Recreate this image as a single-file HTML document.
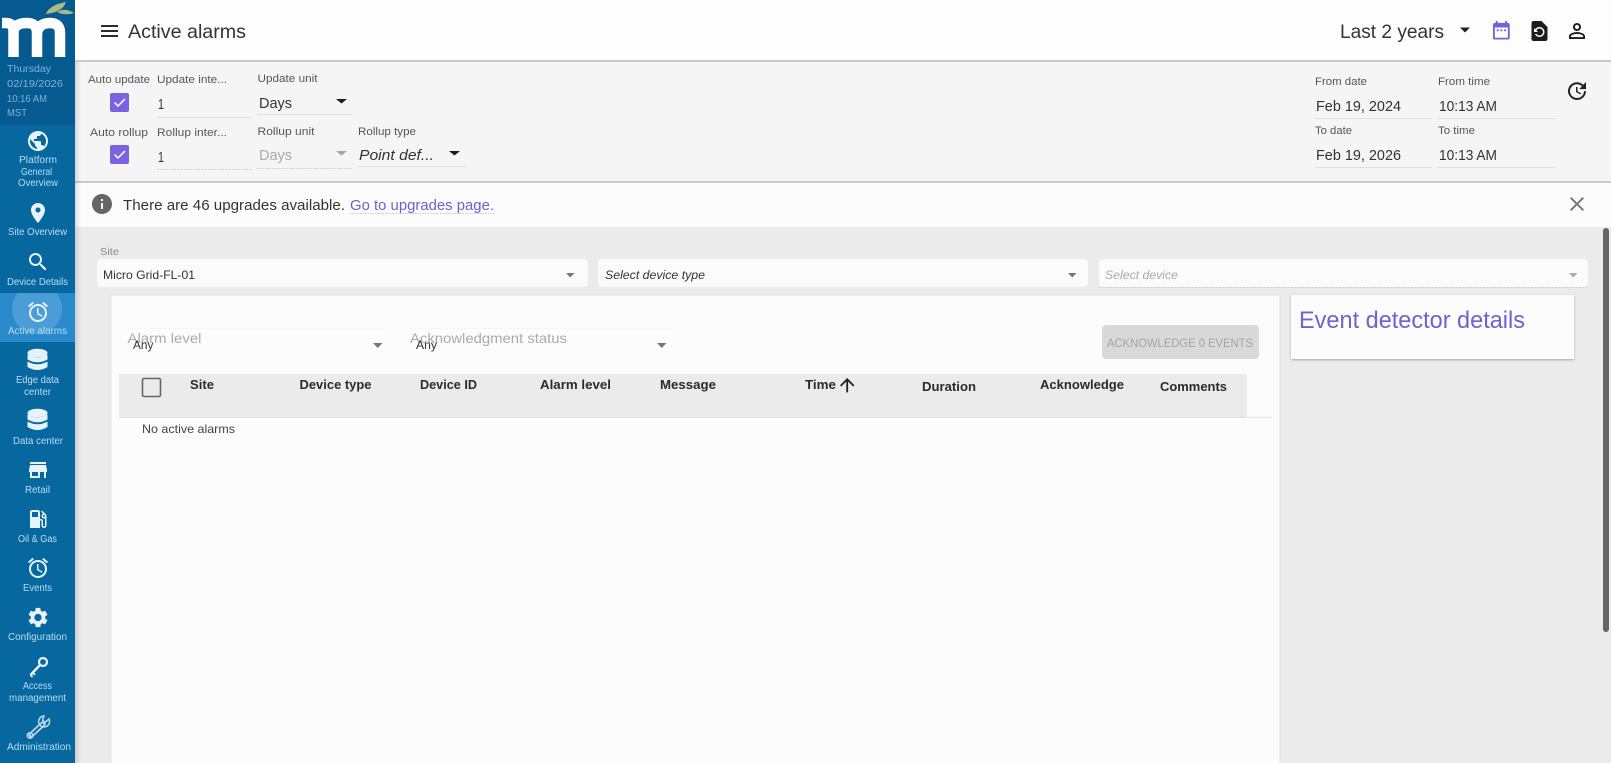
<!DOCTYPE html>
<html lang="en">
<head>
<meta charset="utf-8">
<title>Active alarms</title>
<style>
html,body{margin:0;padding:0;width:1611px;height:763px;overflow:hidden;background:#ebebeb}
svg{display:block;filter:blur(.3px)}
text{font-family:"Liberation Sans",sans-serif}
.s text{fill:#b9dcf0;font-size:10px}
.d text{fill:#7fb4d6;font-size:10.5px}
.l text{fill:#555;font-size:11px}
.v text{fill:#333;font-size:15px}
.h text{fill:#2b2b2b;font-size:12.5px;font-weight:bold}
</style>
</head>
<body>
<svg width="1611" height="763" viewBox="0 0 1611 763" xmlns="http://www.w3.org/2000/svg">
<defs>
<linearGradient id="sh" x1="0" x2="1" y1="0" y2="0"><stop offset="0" stop-color="#000" stop-opacity=".12"/><stop offset="1" stop-color="#000" stop-opacity="0"/></linearGradient>
<filter id="cs" x="-5%" y="-20%" width="110%" height="140%"><feDropShadow dx="0" dy="1" stdDeviation="1" flood-color="#000" flood-opacity=".3"/></filter>
<clipPath id="act"><rect x="0" y="293" width="75" height="49"/></clipPath>
</defs>

<rect width="1611" height="763" fill="#ebebeb"/>
<rect x="75" y="0" width="1536" height="60" fill="#fdfdfd"/>
<rect x="75" y="60" width="1536" height="2" fill="#c9c9c9"/>
<rect x="75" y="62" width="1536" height="119" fill="#f5f5f5"/>
<rect x="75" y="181" width="1536" height="2" fill="#cacaca"/>
<rect x="75" y="183" width="1536" height="44" fill="#fcfcfc"/>

<!-- Sidebar -->
<rect width="75" height="763" fill="#07689f"/>
<rect width="75" height="125" fill="#055a90"/>
<rect x="0" y="293" width="75" height="49" fill="#2a8bcc"/>
<circle cx="37" cy="309" r="25" fill="#4a9dd6" clip-path="url(#act)"/>
<rect x="75" y="62" width="6" height="701" fill="url(#sh)"/>

<!-- Logo -->
<path d="M46 14 Q49 5 66 2 Q63 12 46 14Z" fill="#a9b98a"/>
<path d="M57 12 Q65 7 74 13 Q65 16 57 12Z" fill="#a9b98a"/>
<path d="M2 23 H6 Q13.500 23 13.500 31 V57 M13.500 31 Q15 23 27 23 Q37 23 37 33 V57 M37 33 Q39 23 50 23 Q60 23 60 33 V57" fill="none" stroke="#fff" stroke-width="10.500"/>

<g class="d">
<text x="7" y="72" textLength="44" lengthAdjust="spacingAndGlyphs">Thursday</text>
<text x="7" y="87" textLength="56" lengthAdjust="spacingAndGlyphs">02/19/2026</text>
<text x="7" y="102" textLength="40" lengthAdjust="spacingAndGlyphs">10:16 AM</text>
<text x="7" y="116" textLength="20" lengthAdjust="spacingAndGlyphs">MST</text>
</g>

<g fill="#e6f3fb">
<g transform="translate(26,129)"><path d="M12 2C6.48 2 2 6.48 2 12s4.48 10 10 10 10-4.48 10-10S17.52 2 12 2zm-1 17.93c-3.95-.49-7-3.85-7-7.93 0-.62.08-1.21.21-1.79L9 15v1c0 1.1.9 2 2 2v1.93zm6.9-2.54c-.26-.81-1-1.39-1.9-1.39h-1v-3c0-.55-.45-1-1-1H8v-2h2c.55 0 1-.45 1-1V7h2c1.1 0 2-.9 2-2v-.41c2.93 1.19 5 4.06 5 7.41 0 2.08-.8 3.97-2.1 5.39z"/></g>
<g transform="translate(26,201)"><path d="M12 2C8.13 2 5 5.13 5 9c0 5.25 7 13 7 13s7-7.75 7-13c0-3.87-3.13-7-7-7zm0 9.5c-1.38 0-2.5-1.12-2.5-2.5s1.12-2.5 2.5-2.5 2.5 1.12 2.5 2.5-1.12 2.5-2.5 2.5z"/></g>
<g transform="translate(26,250)"><path d="M15.5 14h-.79l-.28-.27C15.41 12.59 16 11.11 16 9.5 16 5.91 13.09 3 9.5 3S3 5.91 3 9.5 5.91 16 9.5 16c1.61 0 3.09-.59 4.23-1.57l.27.28v.79l5 4.99L20.49 19l-4.99-5zm-6 0C7.01 14 5 11.99 5 9.5S7.01 5 9.5 5 14 7.01 14 9.5 11.99 14 9.5 14z"/></g>
<g transform="translate(26,300)"><path d="M22 5.72l-4.6-3.86-1.29 1.53 4.6 3.86L22 5.72zM7.88 3.39L6.6 1.86 2 5.71l1.29 1.53 4.59-3.85zM12.5 8H11v6l4.75 2.85.75-1.23-4-2.37V8zM12 4c-4.97 0-9 4.03-9 9s4.03 9 9 9 9-4.03 9-9-4.03-9-9-9zm0 16c-3.87 0-7-3.13-7-7s3.13-7 7-7 7 3.13 7 7-3.13 7-7 7z"/></g>
<g transform="translate(26,458)"><path d="M20 4H4v2h16V4zm1 10v-2l-1-5H4l-1 5v2h1v6h10v-6h4v6h2v-6h1zm-9 4H6v-4h6v4z"/></g>
<g transform="translate(26,507)"><path d="M19.77 7.23l.01-.01-3.72-3.72L15 4.56l2.11 2.11c-.94.36-1.61 1.26-1.61 2.33 0 1.38 1.12 2.5 2.5 2.5.36 0 .69-.08 1-.21v7.21c0 .55-.45 1-1 1s-1-.45-1-1V14c0-1.1-.9-2-2-2h-1V5c0-1.1-.9-2-2-2H6c-1.1 0-2 .9-2 2v16h10v-7.5h1.5v5c0 1.38 1.12 2.5 2.5 2.5s2.5-1.12 2.5-2.5V9c0-.69-.28-1.32-.73-1.77zM12 10H6V5h6v5zm6 0c-.55 0-1-.45-1-1s.45-1 1-1 1 .45 1 1-.45 1-1 1z"/></g>
<g transform="translate(26,556)"><path d="M22 5.72l-4.6-3.86-1.29 1.53 4.6 3.86L22 5.72zM7.88 3.39L6.6 1.86 2 5.71l1.29 1.53 4.59-3.85zM12.5 8H11v6l4.75 2.85.75-1.23-4-2.37V8zM12 4c-4.97 0-9 4.03-9 9s4.03 9 9 9 9-4.03 9-9-4.03-9-9-9zm0 16c-3.87 0-7-3.13-7-7s3.13-7 7-7 7 3.13 7 7-3.13 7-7 7z"/></g>
<g transform="translate(26,605.5)"><path d="M19.14 12.94c.04-.3.06-.61.06-.94 0-.32-.02-.64-.07-.94l2.03-1.58c.18-.14.23-.41.12-.61l-1.92-3.32c-.12-.22-.37-.29-.59-.22l-2.39.96c-.5-.38-1.03-.7-1.62-.94l-.36-2.54c-.04-.24-.24-.41-.48-.41h-3.84c-.24 0-.43.17-.47.41l-.36 2.54c-.59.24-1.13.57-1.62.94l-2.39-.96c-.22-.08-.47 0-.59.22L2.74 8.87c-.12.21-.08.47.12.61l2.03 1.58c-.05.3-.09.63-.09.94s.02.64.07.94l-2.03 1.58c-.18.14-.23.41-.12.61l1.92 3.32c.12.22.37.29.59.22l2.39-.96c.5.38 1.03.7 1.62.94l.36 2.54c.05.24.24.41.48.41h3.84c.24 0 .44-.17.47-.41l.36-2.54c.59-.24 1.13-.56 1.62-.94l2.39.96c.22.08.47 0 .59-.22l1.92-3.32c.12-.22.07-.47-.12-.61l-2.01-1.58zM12 15.6c-1.98 0-3.6-1.62-3.6-3.6s1.62-3.6 3.6-3.6 3.6 1.62 3.6 3.6-1.62 3.6-3.6 3.6z"/></g>
<!-- database stacks -->
<g transform="translate(27.5,349)"><ellipse cx="10" cy="4" rx="10" ry="4.2"/><path d="M0 5.5 Q10 11 20 5.5 V10.5 Q10 16 0 10.5Z M0 12.5 Q10 18 20 12.500 V18 Q10 24 0 18Z"/></g>
<g transform="translate(27.5,409)"><ellipse cx="10" cy="4" rx="10" ry="4.2"/><path d="M0 5.5 Q10 11 20 5.5 V10.5 Q10 16 0 10.5Z M0 12.5 Q10 18 20 12.500 V18 Q10 24 0 18Z"/></g>
</g>
<!-- key -->
<g fill="none" stroke="#e6f3fb">
<circle cx="43" cy="662" r="4" stroke-width="2.2"/>
<path d="M40 665 L30.5 675" stroke-width="2.4"/>
<path d="M33 672.5 L35 675 M30.5 675 L32.5 677" stroke-width="1.8"/>
<!-- wrench -->
<path d="M43 724 L31 735" stroke="#b7d9ee" stroke-width="5.5" stroke-linecap="round"/>
<path d="M43 724 L31 735" stroke="#07689f" stroke-width="2"/>
<path d="M49 719 A5.5 5.5 0 1 1 44 716 L42.5 720 L45 722.5Z" stroke="#b7d9ee" stroke-width="1.5"/>
<circle cx="30" cy="735.5" r="2.8" stroke="#b7d9ee" stroke-width="1.5"/>
</g>

<g class="s" text-anchor="start">
<text x="19" y="163" textLength="38" lengthAdjust="spacingAndGlyphs">Platform</text>
<text x="21" y="175" textLength="31" lengthAdjust="spacingAndGlyphs">General</text>
<text x="18" y="186" textLength="40" lengthAdjust="spacingAndGlyphs">Overview</text>
<text x="8" y="235" textLength="59" lengthAdjust="spacingAndGlyphs">Site Overview</text>
<text x="7" y="285" textLength="61" lengthAdjust="spacingAndGlyphs">Device Details</text>
<text x="8" y="334" textLength="59" lengthAdjust="spacingAndGlyphs">Active alarms</text>
<text x="16" y="383" textLength="43" lengthAdjust="spacingAndGlyphs">Edge data</text>
<text x="24" y="395" textLength="27" lengthAdjust="spacingAndGlyphs">center</text>
<text x="13" y="444" textLength="50" lengthAdjust="spacingAndGlyphs">Data center</text>
<text x="25" y="493" textLength="25" lengthAdjust="spacingAndGlyphs">Retail</text>
<text x="18" y="542" textLength="39" lengthAdjust="spacingAndGlyphs">Oil &amp; Gas</text>
<text x="23" y="591" textLength="29" lengthAdjust="spacingAndGlyphs">Events</text>
<text x="8" y="640" textLength="59" lengthAdjust="spacingAndGlyphs">Configuration</text>
<text x="23" y="689" textLength="29" lengthAdjust="spacingAndGlyphs">Access</text>
<text x="9" y="701" textLength="57" lengthAdjust="spacingAndGlyphs">management</text>
<text x="7" y="750" textLength="64" lengthAdjust="spacingAndGlyphs">Administration</text>
</g>

<!-- Top bar -->
<g fill="#2b2b2b"><rect x="101" y="25" width="17" height="2"/><rect x="101" y="30" width="17" height="2"/><rect x="101" y="35" width="17" height="2"/></g>
<text x="128" y="38" font-size="19.5" fill="#333" textLength="118" lengthAdjust="spacingAndGlyphs">Active alarms</text>
<text x="1340" y="38" font-size="19" fill="#333" textLength="104" lengthAdjust="spacingAndGlyphs">Last 2 years</text>
<path d="M1460 27.500 h10 l-5 5z" fill="#222"/>
<g transform="translate(1490.2,19.1) scale(.93)" fill="#7561d8"><path d="M9 11H7v2h2v-2zm4 0h-2v2h2v-2zm4 0h-2v2h2v-2zm2-7h-1V2h-2v2H8V2H6v2H5c-1.11 0-1.99.9-1.99 2L3 20c0 1.1.89 2 2 2h14c1.1 0 2-.9 2-2V6c0-1.1-.9-2-2-2zm0 16H5V9h14v11z"/></g>
<g transform="translate(1527.5,19)" fill="#1c1c1c"><path d="M14 2H6c-1.1 0-1.99.9-1.99 2L4 20c0 1.1.89 2 1.99 2H18c1.1 0 2-.9 2-2V8l-6-6zm-2 16c-2.05 0-3.81-1.24-4.58-3h1.71c.63.9 1.68 1.5 2.87 1.5 1.93 0 3.5-1.57 3.5-3.5S13.93 9.5 12 9.5c-1.35 0-2.52.78-3.1 1.9l1.6 1.6h-4V9l1.3 1.3C8.69 8.92 10.23 8 12 8c2.76 0 5 2.24 5 5s-2.24 5-5 5z"/></g>
<g transform="translate(1565,19)" fill="#1c1c1c"><path d="M12 5.9c1.16 0 2.1.94 2.1 2.1s-.94 2.1-2.1 2.1S9.9 9.16 9.9 8s.94-2.1 2.1-2.1m0 9c2.97 0 6.1 1.46 6.1 2.1v1.1H5.9V17c0-.64 3.13-2.1 6.1-2.1M12 4C9.79 4 8 5.79 8 8s1.79 4 4 4 4-1.79 4-4-1.79-4-4-4zm0 9c-2.67 0-8 1.34-8 4v3h16v-3c0-2.66-5.33-4-8-4z"/></g>

<!-- Toolbar labels -->
<g class="l">
<text x="88" y="83" textLength="62" lengthAdjust="spacingAndGlyphs">Auto update</text>
<text x="157" y="83" textLength="70" lengthAdjust="spacingAndGlyphs">Update inte...</text>
<text x="257.5" y="82" textLength="60" lengthAdjust="spacingAndGlyphs">Update unit</text>
<text x="90" y="136" textLength="58" lengthAdjust="spacingAndGlyphs">Auto rollup</text>
<text x="157" y="136" textLength="70" lengthAdjust="spacingAndGlyphs">Rollup inter...</text>
<text x="257.5" y="135" textLength="57" lengthAdjust="spacingAndGlyphs">Rollup unit</text>
<text x="358" y="135" textLength="58" lengthAdjust="spacingAndGlyphs">Rollup type</text>
<text x="1315" y="85" textLength="52" lengthAdjust="spacingAndGlyphs">From date</text>
<text x="1438" y="85" textLength="52" lengthAdjust="spacingAndGlyphs">From time</text>
<text x="1315" y="134" textLength="37" lengthAdjust="spacingAndGlyphs">To date</text>
<text x="1438" y="134" textLength="37" lengthAdjust="spacingAndGlyphs">To time</text>
</g>
<g class="v">
<text x="158" y="109" textLength="6" lengthAdjust="spacingAndGlyphs">1</text>
<text x="259" y="108" textLength="33" lengthAdjust="spacingAndGlyphs">Days</text>
<text x="158" y="162" textLength="6" lengthAdjust="spacingAndGlyphs">1</text>
<text x="259" y="160" textLength="33" lengthAdjust="spacingAndGlyphs" style="fill:#aaa">Days</text>
<text x="359" y="160" font-style="italic" textLength="75" lengthAdjust="spacingAndGlyphs">Point def...</text>
<text x="1316" y="111" textLength="85" lengthAdjust="spacingAndGlyphs">Feb 19, 2024</text>
<text x="1439" y="111" textLength="58" lengthAdjust="spacingAndGlyphs">10:13 AM</text>
<text x="1316" y="160" textLength="85" lengthAdjust="spacingAndGlyphs">Feb 19, 2026</text>
<text x="1439" y="160" textLength="58" lengthAdjust="spacingAndGlyphs">10:13 AM</text>
</g>
<!-- checkboxes -->
<rect x="110" y="93" width="19" height="19" rx="2" fill="#7b62e0"/>
<path d="M114.5 102.5 l3.5 3.5 l7-7" fill="none" stroke="#f1eefc" stroke-width="1.6"/>
<rect x="110" y="145" width="19" height="19" rx="2" fill="#7b62e0"/>
<path d="M114.5 154.5 l3.5 3.5 l7-7" fill="none" stroke="#f1eefc" stroke-width="1.6"/>
<!-- carets and lines -->
<g fill="#1d1d1d">
<path d="M336 99 h11 l-5.5 4.5z"/>
<path d="M449 151 h11 l-5.5 4.5z"/>
</g>
<path d="M336 151 h11 l-5.5 4.5z" fill="#a5a5a5"/>
<g stroke="#e0e0e0" stroke-width="1">
<path d="M157 117.5 H252 M257 114.5 H352 M358 166.500 H467 M1315 118.500 H1432 M1437 118.500 H1556 M1315 167.500 H1432 M1437 167.500 H1556"/>
</g>
<g stroke="#c4c4c4" stroke-width="1" stroke-dasharray="1.5 1.5">
<path d="M157 169.5 H252 M257 168.5 H352"/>
</g>
<g transform="translate(1565,79)" fill="#222"><path d="M21 10.12h-6.78l2.74-2.82c-2.73-2.7-7.15-2.8-9.88-.1-2.73 2.71-2.73 7.08 0 9.79s7.15 2.71 9.88 0C18.32 15.65 19 14.08 19 12.1h2c0 1.98-.88 4.55-2.64 6.29-3.51 3.48-9.21 3.48-12.72 0-3.5-3.47-3.53-9.11-.02-12.58s9.14-3.47 12.65 0L21 3v7.12zM12.5 8v4.25l3.5 2.08-.72 1.21L11 13V8h1.5z"/></g>

<!-- Notification -->
<g transform="translate(90,192)" fill="#666"><path d="M12 2C6.48 2 2 6.48 2 12s4.48 10 10 10 10-4.48 10-10S17.52 2 12 2zm1 15h-2v-6h2v6zm0-8h-2V7h2v2z"/></g>
<text x="123" y="210" font-size="15" fill="#333" textLength="222" lengthAdjust="spacingAndGlyphs">There are 46 upgrades available.</text>
<text x="350" y="210" font-size="15" fill="#6f5fd0" textLength="144" lengthAdjust="spacingAndGlyphs">Go to upgrades page.</text>
<path d="M350 213.5 H494" stroke="#c9c2ee" stroke-width="1" stroke-dasharray="1.5 1"/>
<g transform="translate(1565,192)" fill="#777"><path d="M19 6.41L17.59 5 12 10.59 6.41 5 5 6.41 10.59 12 5 17.59 6.41 19 12 13.41 17.59 19 19 17.59 13.41 12z"/></g>

<!-- Site selects -->
<text x="100" y="255" font-size="10" fill="#888" textLength="19" lengthAdjust="spacingAndGlyphs">Site</text>
<rect x="97" y="259" width="491" height="28" rx="4" fill="#fbfbfb"/>
<rect x="598" y="259" width="490" height="28" rx="4" fill="#fbfbfb"/>
<rect x="1099" y="259" width="489" height="28" rx="4" fill="#fbfbfb"/>
<path d="M1099 287.5 H1588" stroke="#c8c8c8" stroke-dasharray="1.5 1.5"/>
<text x="103" y="279" font-size="12" fill="#333" textLength="92" lengthAdjust="spacingAndGlyphs">Micro Grid-FL-01</text>
<text x="605" y="279" font-size="12" font-style="italic" fill="#333" textLength="100" lengthAdjust="spacingAndGlyphs">Select device type</text>
<text x="1105" y="279" font-size="12" font-style="italic" fill="#aaa" textLength="73" lengthAdjust="spacingAndGlyphs">Select device</text>
<path d="M566 273 h8.5 l-4.25 4.5z" fill="#777"/>
<path d="M1068 273 h8.5 l-4.25 4.5z" fill="#777"/>
<path d="M1569 273 h8.5 l-4.25 4.5z" fill="#aaa"/>

<!-- Main card -->
<rect x="111" y="295" width="1169" height="480" fill="#fcfcfc" stroke="#e2e2e2" stroke-width="1"/>
<path d="M127 328.5 H384 M410 328.5 H672" stroke="#f6f6f6"/>
<text x="127.5" y="343" font-size="14" fill="#aaa" textLength="74" lengthAdjust="spacingAndGlyphs">Alarm level</text>
<text x="410" y="343" font-size="14" fill="#aaa" textLength="157" lengthAdjust="spacingAndGlyphs">Acknowledgment status</text>
<text x="133" y="349" font-size="11.5" fill="#333" textLength="20.5" lengthAdjust="spacingAndGlyphs">Any</text>
<text x="416" y="349" font-size="11.5" fill="#333" textLength="21" lengthAdjust="spacingAndGlyphs">Any</text>
<path d="M373 343 h9.5 l-4.75 5z" fill="#777"/>
<path d="M657 343 h9.5 l-4.75 5z" fill="#777"/>
<rect x="1102" y="325" width="157" height="34" rx="4" fill="#d9d9d9"/>
<text x="1107" y="347" font-size="12" fill="#a3a3a3" textLength="146" lengthAdjust="spacingAndGlyphs">ACKNOWLEDGE 0 EVENTS</text>

<!-- Table -->
<rect x="119" y="374" width="1128" height="43" fill="#ebebeb"/>
<path d="M119 417.5 H1272" stroke="#e2e2e2"/>
<rect x="142.5" y="378.5" width="18" height="18" rx="1.5" fill="none" stroke="#666" stroke-width="1.6"/>
<g class="h">
<text x="190" y="389" textLength="24" lengthAdjust="spacingAndGlyphs">Site</text>
<text x="299.5" y="389" textLength="72" lengthAdjust="spacingAndGlyphs">Device type</text>
<text x="420" y="389" textLength="57" lengthAdjust="spacingAndGlyphs">Device ID</text>
<text x="540" y="389" textLength="71" lengthAdjust="spacingAndGlyphs">Alarm level</text>
<text x="660" y="389" textLength="56" lengthAdjust="spacingAndGlyphs">Message</text>
<text x="805" y="389" textLength="31" lengthAdjust="spacingAndGlyphs">Time</text>
<text x="922" y="391" textLength="54" lengthAdjust="spacingAndGlyphs">Duration</text>
<text x="1040" y="389" textLength="84" lengthAdjust="spacingAndGlyphs">Acknowledge</text>
<text x="1160" y="391" textLength="67" lengthAdjust="spacingAndGlyphs">Comments</text>
</g>
<g transform="translate(836.4,374.4) scale(.9)" fill="#222"><path d="M4 12l1.41 1.41L11 7.83V20h2V7.83l5.58 5.59L20 12l-8-8-8 8z"/></g>
<text x="142" y="433" font-size="12" fill="#444" textLength="93" lengthAdjust="spacingAndGlyphs">No active alarms</text>

<!-- Details card -->
<rect x="1291" y="295" width="283" height="64" fill="#fcfcfc" filter="url(#cs)"/>
<text x="1299" y="328" font-size="24" fill="#7361cf" textLength="226" lengthAdjust="spacingAndGlyphs">Event detector details</text>

<!-- Scrollbar -->
<rect x="1603" y="228" width="6" height="404" rx="3" fill="#666"/>
</svg>
</body>
</html>
